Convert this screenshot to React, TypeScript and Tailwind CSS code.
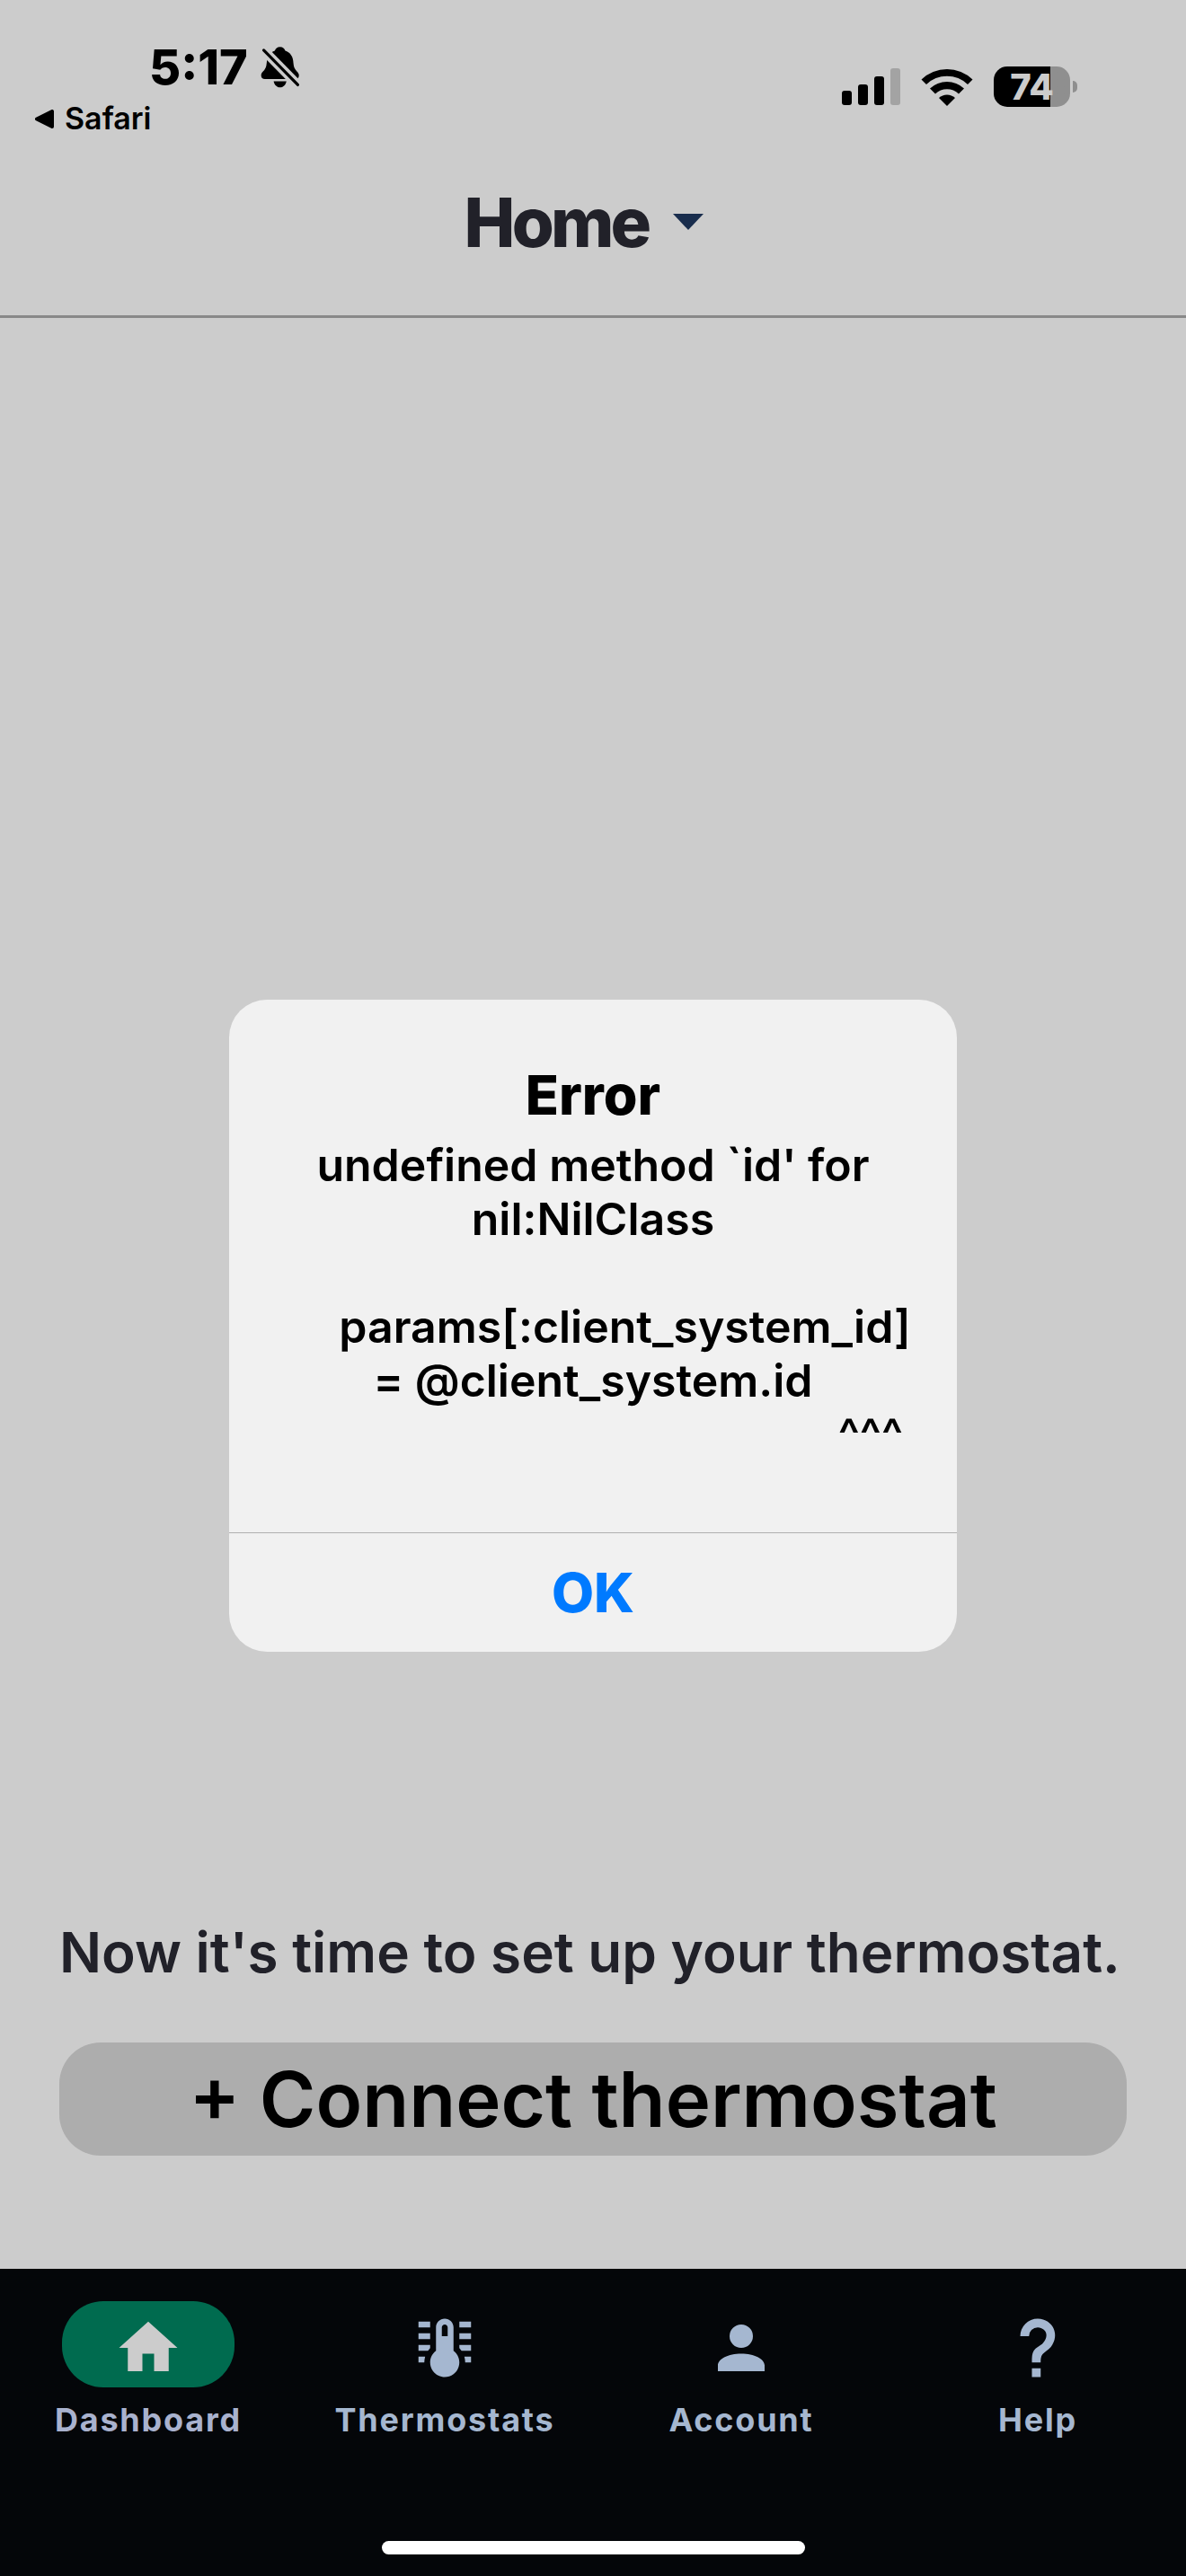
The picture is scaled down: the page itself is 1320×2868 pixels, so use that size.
import type { ReactNode } from "react";

function BellOff() {
  return (
    <svg viewBox="870 94 134 142" className="h-[46px] w-[44px]" aria-label="Silent mode">
      <path d="M936 95C926 95 921 101 918 108C902 113 893 126 891 142C889 160 889 164 882 174C876 181 871 184 871 192C871 201 876 205 884 205H988C996 205 1001 201 1001 192C1001 184 995 181 990 174C983 164 983 160 981 142C979 126 970 113 954 108C951 101 946 95 936 95Z" />
      <path d="M868 94L1000 228" stroke="#cccccc" strokeWidth="32" />
      <path d="M914 213H958C955 227 946 234 936 234S917 227 914 213Z" />
      <path d="M880 106L997 225" stroke="#000" strokeWidth="10" strokeLinecap="round" />
    </svg>
  );
}

function Signal() {
  return (
    <svg viewBox="0 0 65 41" className="h-[41px] w-[65px]" aria-label="Cellular signal">
      <rect x="0" y="25" width="11" height="16" rx="3" />
      <rect x="18" y="18" width="11" height="23" rx="3" />
      <rect x="36" y="9" width="11" height="32" rx="3" />
      <rect x="54" y="0" width="11" height="41" rx="3" fill="#a3a3a3" />
    </svg>
  );
}

function Wifi() {
  return (
    <svg viewBox="0 0 58 42" className="h-[42px] w-[58px]" aria-label="Wi-Fi">
      <path d="M0.500 12.500A41 41 0 0 1 57.500 12.500L52 18A33 33 0 0 0 6 18Z" />
      <path d="M10 22.500A28 28 0 0 1 48 22.500L42 28.500A18.500 18.500 0 0 0 16 28.500Z" />
      <path d="M20 33A13 13 0 0 1 38 33L29 42Z" />
    </svg>
  );
}

function Battery() {
  return (
    <div className="flex items-center gap-[3px]">
      <div className="flex h-[45px] w-[85px] items-center justify-center rounded-[15px] bg-linear-to-r from-black from-74% to-[#8f8f8f] to-74% text-[40px] leading-none font-extrabold text-[#cccccc]">
        74
      </div>
      <div className="h-[13px] w-[5px] rounded-r-full bg-[#8f8f8f]" />
    </div>
  );
}

const icons = {
  home: "M10 20v-6h4v6h5v-8h3L12 3 2 12h3v8z",
  thermostat:
    "M17 3H21V5H17V3M17 7H21V9H17V7M17 11H21V13H17.75L17 12.1V11M21 15V17H19C19 16.31 18.9 15.63 18.71 15H21M7 3V5H3V3H7M7 7V9H3V7H7M7 11V12.1L6.25 13H3V11H7M3 15H5.29C5.1 15.63 5 16.31 5 17H3V15M15 13V5C15 3.34 13.66 2 12 2S9 3.34 9 5V13C6.79 14.66 6.34 17.79 8 20S12.79 22.66 15 21 17.66 16.21 16 14C15.72 13.62 15.38 13.28 15 13M12 4C12.55 4 13 4.45 13 5V8H11V5C11 4.45 11.45 4 12 4Z",
  account: "M12 4a4 4 0 1 1 0 8a4 4 0 0 1 0-8M12 14c4.42 0 8 1.79 8 4v2H4v-2c0-2.21 3.58-4 8-4Z",
  help: "M10 19H13V22H10V19M12 2C17.35 2.22 19.68 7.62 16.5 11.67C15.67 12.67 14.33 13.33 13.67 14.17C13 15 13 16 13 17H10C10 15.33 10 13.92 10.67 12.92C11.33 11.92 12.67 11.33 13.5 10.67C15.92 8.43 15.32 5.26 12 5A3 3 0 0 0 9 8H6A6 6 0 0 1 12 2Z",
};

function NavItem({ path, active, children }: { path: string; active?: boolean; children: ReactNode }) {
  return (
    <a
      href="#"
      aria-current={active ? "page" : undefined}
      className={
        active
          ? "flex flex-1 flex-col items-center gap-[14px] text-[#a9b2ce]"
          : "flex flex-1 flex-col items-center gap-[14px] text-[#a5b7d0]"
      }
    >
      <span
        className={
          active
            ? "flex h-24 w-48 items-center justify-center rounded-[46px] bg-[#006b4f] pt-2 text-[#cccccc]"
            : "flex h-24 w-48 items-center justify-center pt-2"
        }
      >
        <svg viewBox="0 0 24 24" className="size-[78px]" fill="currentColor" aria-hidden="true">
          <path d={path} />
        </svg>
      </span>
      <span className="text-[36px] leading-[44px] font-bold tracking-wider">{children}</span>
    </a>
  );
}

export default function App() {
  return (
    <div className="relative flex min-h-screen flex-col bg-[#cccccc] font-[Inter,sans-serif] text-black">
      <div className="flex items-start justify-between pt-[50px] pr-[121px] pl-[39px]">
        <div>
          <div className="flex items-center gap-[14px] pl-[127px]">
            <time className="text-[54px] leading-[50px] font-extrabold">5:17</time>
            <BellOff />
          </div>
          <a href="#" className="mt-3 flex items-center gap-3 text-[34px] leading-[40px] font-semibold">
            <svg viewBox="0 0 21 21" className="size-[21px]" aria-hidden="true">
              <path d="M2 10.500L19 2V19Z" stroke="#000" strokeWidth="4" strokeLinejoin="round" />
            </svg>
            Safari
          </a>
        </div>
        <div className="flex items-center gap-[23px] pt-6">
          <Signal />
          <Wifi />
          <Battery />
        </div>
      </div>

      <header className="flex h-[202px] items-center justify-center border-b-3 border-[#888888] pr-5 pb-[10px]">
        <button type="button" className="flex items-center gap-7 text-[#212129]">
          <h1 className="text-[76px] leading-[92px] font-extrabold tracking-tighter">Home</h1>
          <svg viewBox="0 0 34 18" className="h-[18px] w-[34px]" fill="#192d4d" aria-hidden="true">
            <path d="M0 0H34L17 18Z" />
          </svg>
        </button>
      </header>

      <main className="flex flex-1 flex-col justify-end px-[66px] pb-[126px]">
        <p className="text-[62px] leading-[80px] font-semibold whitespace-nowrap text-[#212129]">
          Now it's time to set up your thermostat.
        </p>
        <button
          type="button"
          className="mt-[60px] h-[126px] rounded-[46px] bg-[#adadad] text-[85px] leading-none font-semibold"
        >
          + Connect thermostat
        </button>
      </main>

      <nav className="bg-[#040609] pt-9 pb-6">
        <div className="flex">
          <NavItem path={icons.home} active>
            Dashboard
          </NavItem>
          <NavItem path={icons.thermostat}>Thermostats</NavItem>
          <NavItem path={icons.account}>Account</NavItem>
          <NavItem path={icons.help}>Help</NavItem>
        </div>
        <div className="mx-auto mt-[113px] h-[15px] w-[471px] rounded-full bg-white" />
      </nav>

      <div className="absolute inset-0 flex items-center justify-center pt-[84px]">
        <div
          role="alertdialog"
          aria-labelledby="error-title"
          aria-describedby="error-message"
          className="w-[810px] overflow-hidden rounded-[42px] bg-[#f1f1f1] text-center"
        >
          <div className="pt-[68px] pb-[79px]">
            <h2 id="error-title" className="text-[61px] leading-[76px] font-extrabold">
              Error
            </h2>
            <div id="error-message" className="mt-[10px] text-[50px] leading-[60px] font-semibold whitespace-nowrap">
              <p>undefined method `id' for</p>
              <p>nil:NilClass</p>
              <br />
              <p className="pl-[71px]">params[:client_system_id]</p>
              <p>= @client_system.id</p>
              <p className="pr-[60px] text-right">^^^</p>
            </div>
          </div>
          <button
            type="button"
            className="h-[133px] w-full border-t border-[#b0b0b0] text-[61px] leading-none font-extrabold text-[#007aff]"
          >
            OK
          </button>
        </div>
      </div>
    </div>
  );
}
